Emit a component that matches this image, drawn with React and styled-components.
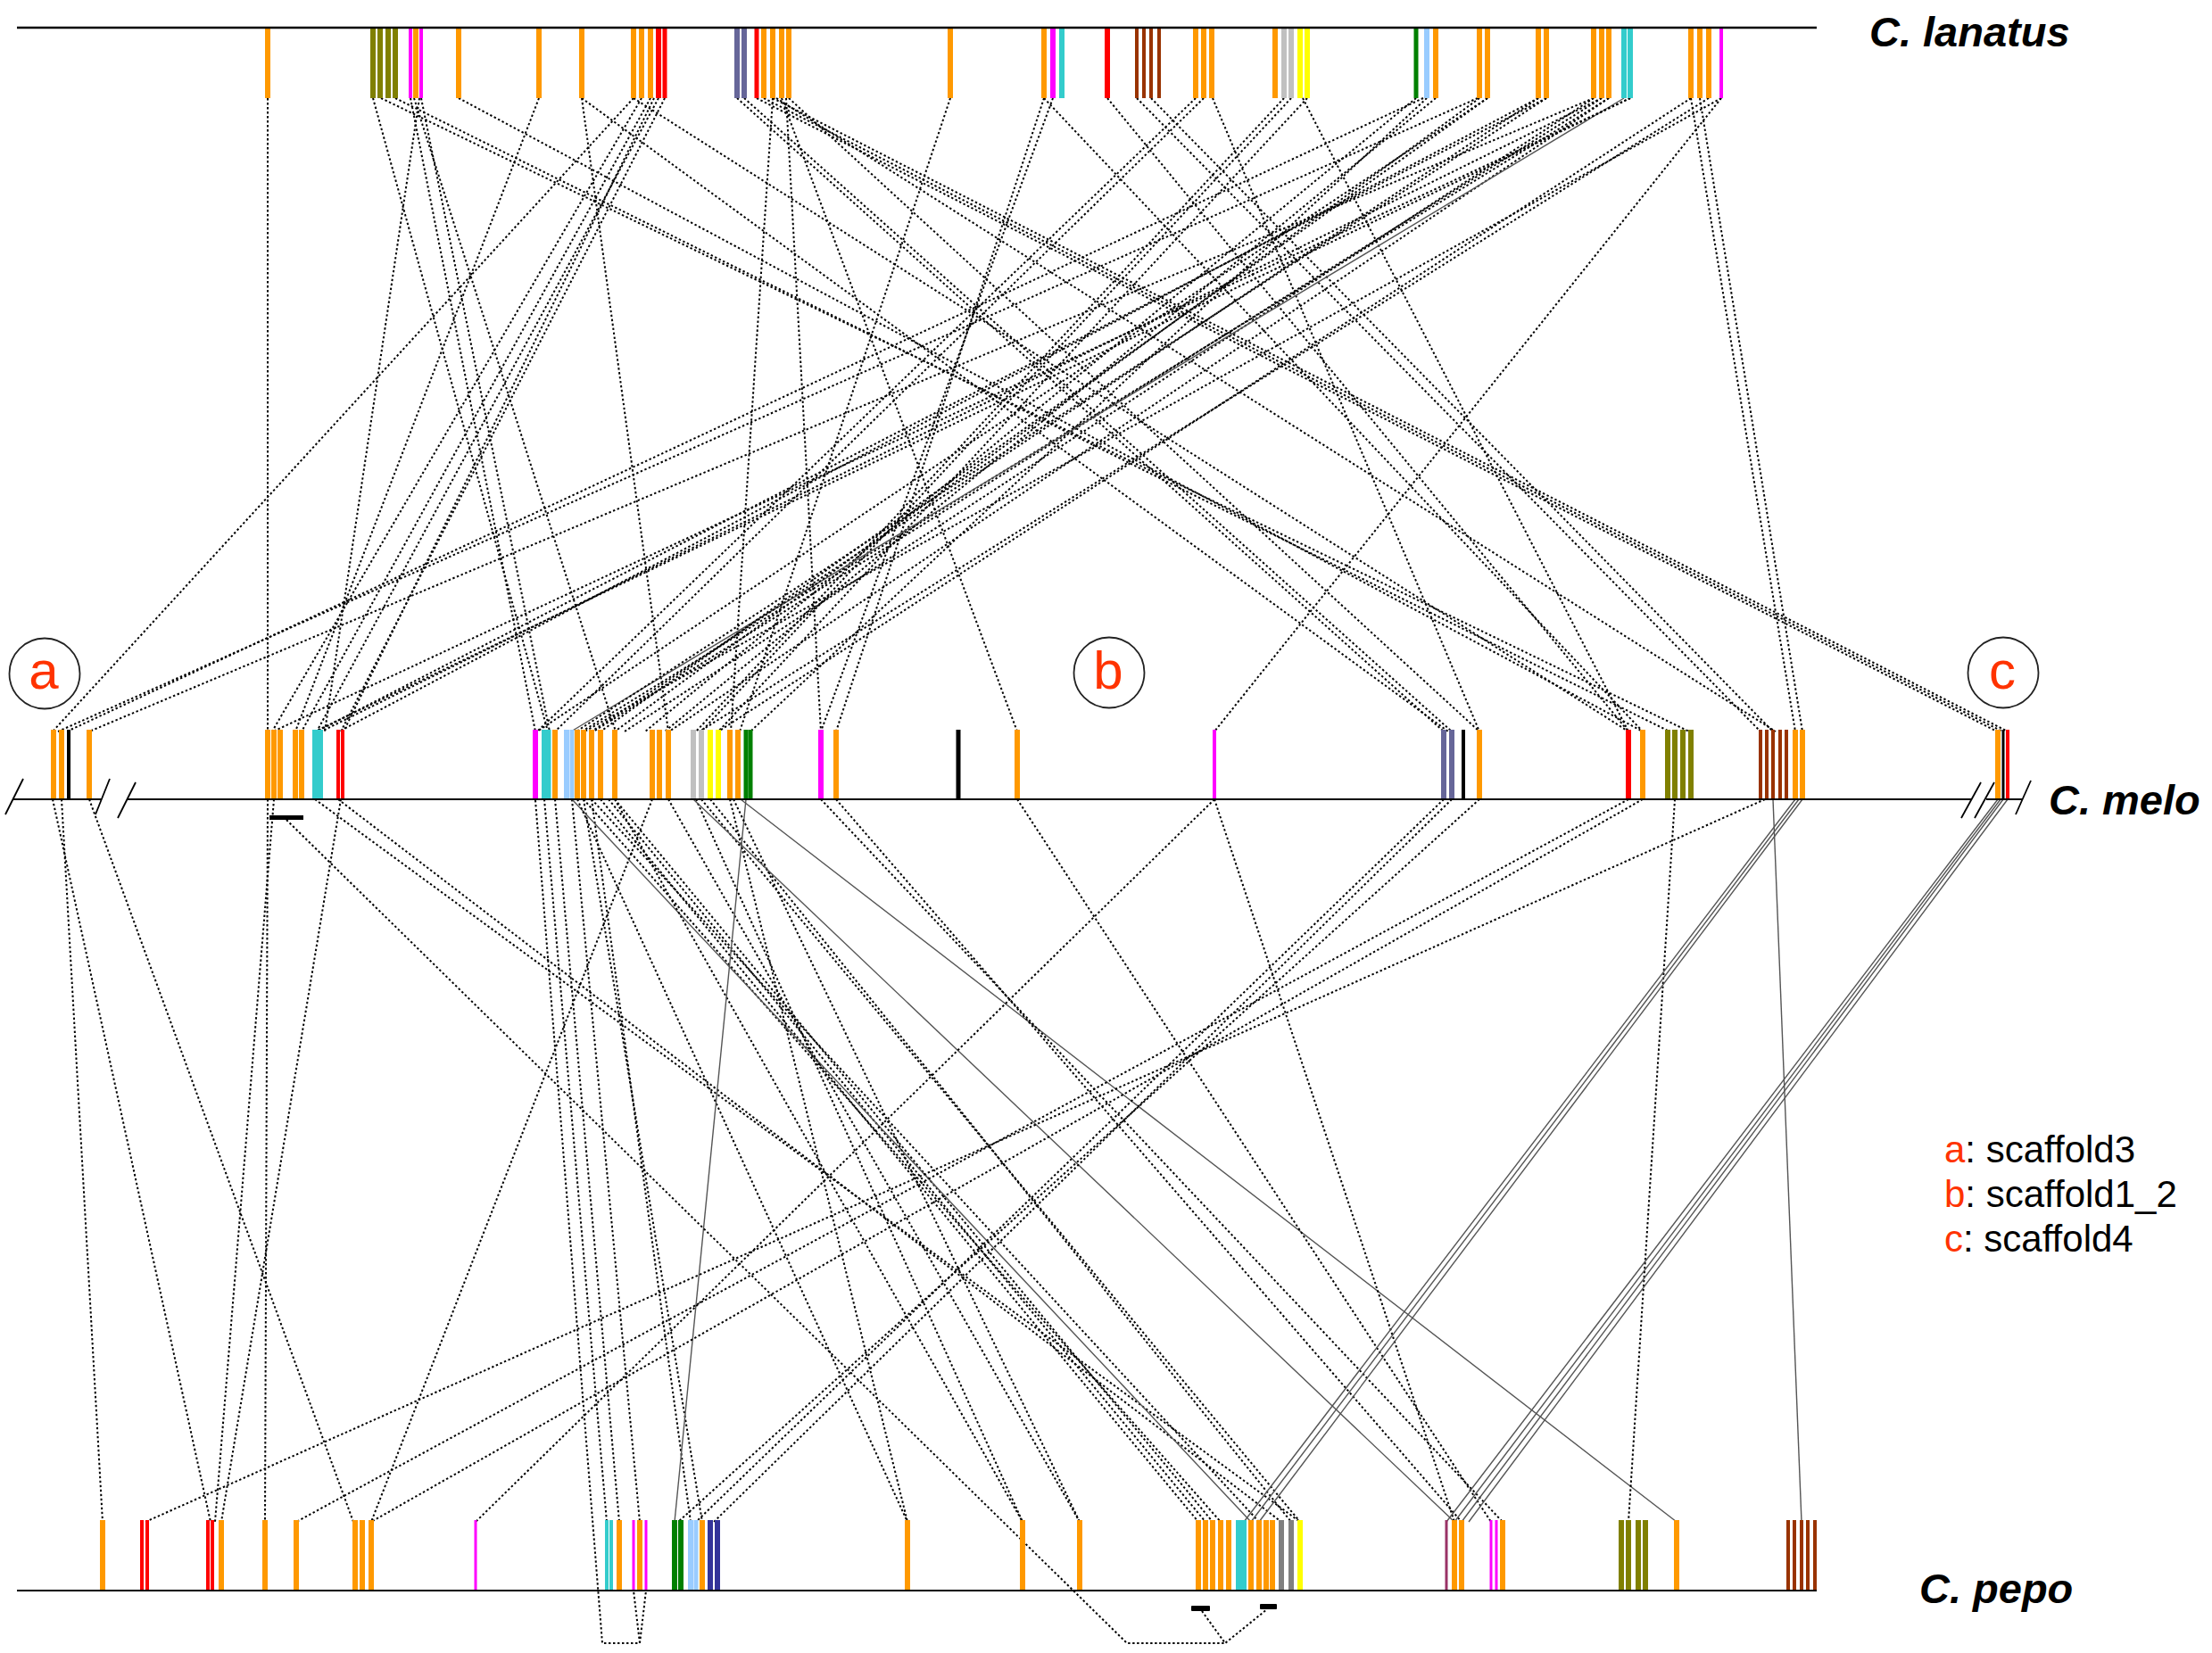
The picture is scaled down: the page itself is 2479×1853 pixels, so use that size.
import React from 'react';
import styled, { createGlobalStyle } from 'styled-components';

const GlobalStyle = createGlobalStyle`
  html, body {
    margin: 0;
    padding: 0;
    background: #fff;
  }
  body {
    font-family: "Liberation Sans", Arial, sans-serif;
  }
`;

const COLORS = {
  O: '#ff9900',
  Ol: '#808000',
  M: '#ff00ff',
  R: '#ff0000',
  S: '#666699',
  Br: '#993300',
  G: '#c0c0c0',
  DG: '#808080',
  Y: '#ffff00',
  Gr: '#008000',
  LB: '#99ccff',
  C: '#33cccc',
  N: '#333399',
  DM: '#993366',
  K: '#000000',
};

// rows: y of the axis line and the top of the gene bars
const TOP = { axis: 31, barTop: 32, barBottom: 110 };
const MID = { axis: 896, barTop: 818, barBottom: 896 };
const BOT = { axis: 1783, barTop: 1704, barBottom: 1782 };

// [centre x, colour, width]
const lanatusGenes = [
  [300, 'O'],
  [418, 'Ol'], [426, 'Ol'], [435, 'Ol'], [443, 'Ol'],
  [460, 'M', 4], [466, 'O'], [472, 'M', 4],
  [514, 'O'], [604, 'O'], [652, 'O'],
  [710, 'O'], [719, 'O'], [729, 'O'], [738, 'R'], [745, 'R', 5],
  [826, 'S'], [834, 'S'],
  [848, 'R', 5], [856, 'O'], [866, 'O'], [876, 'O'], [884, 'O'],
  [1065, 'O'],
  [1170, 'O'], [1180, 'M'], [1190, 'C'],
  [1241, 'R'],
  [1274, 'Br', 4], [1282, 'Br', 4], [1290, 'Br', 4], [1299, 'Br', 4],
  [1340, 'O'], [1349, 'O'], [1358, 'O'],
  [1429, 'O'], [1439, 'G'], [1447, 'G'], [1457, 'Y'], [1465, 'Y'],
  [1587, 'Gr', 5], [1599, 'LB'], [1609, 'O'],
  [1658, 'O'], [1667, 'O'],
  [1724, 'O'], [1733, 'O'],
  [1786, 'O'], [1795, 'O'], [1803, 'O'], [1820, 'C'], [1827, 'C'],
  [1895, 'O'], [1905, 'O'], [1915, 'O'], [1929, 'M', 4],
];

const meloGenes = [
  [60, 'O'], [69, 'O'], [77, 'K', 4], [100, 'O'],
  [300, 'O'], [307, 'O'], [314, 'O'], [331, 'O'], [338, 'O'],
  [353, 'C'], [359, 'C'], [379, 'R', 4], [384, 'R', 4],
  [600, 'M'], [610, 'C'], [615, 'C', 5], [622, 'O'],
  [635, 'LB'], [641, 'LB', 5], [647, 'O'], [654, 'O'], [663, 'O'], [673, 'O'], [689, 'O'],
  [731, 'O'], [739, 'O'], [749, 'O'],
  [777, 'G'], [786, 'G'], [796, 'Y'], [805, 'Y'], [818, 'O'], [827, 'O'], [836, 'Gr', 5], [841, 'Gr', 5],
  [920, 'M'], [937, 'O'],
  [1074, 'K', 5],
  [1140, 'O'],
  [1361, 'M', 4],
  [1618, 'S'], [1627, 'S'], [1640, 'K', 4], [1658, 'O'],
  [1825, 'R'], [1841, 'O'],
  [1869, 'Ol'], [1877, 'Ol'], [1886, 'Ol'], [1895, 'Ol'],
  [1973, 'Br', 4], [1980, 'Br', 4], [1987, 'Br', 4], [1995, 'Br', 4], [2002, 'Br', 4],
  [2012, 'O'], [2020, 'O'],
  [2239, 'O'], [2245, 'K', 3], [2250, 'R', 4],
];

const pepoGenes = [
  [115, 'O'],
  [159, 'R', 4], [165, 'R', 4],
  [233, 'R', 4], [238, 'R', 4], [248, 'O'],
  [297, 'O'], [332, 'O'],
  [398, 'O'], [406, 'O'], [416, 'O'],
  [533, 'M', 3],
  [680, 'C', 4], [685, 'C', 4], [694, 'O'],
  [710, 'M', 3], [717, 'O'], [724, 'M', 3],
  [756, 'Gr'], [763, 'Gr'],
  [774, 'LB'], [780, 'LB', 5], [787, 'O'],
  [796, 'N'], [804, 'N'],
  [1017, 'O'], [1146, 'O'], [1210, 'O'],
  [1343, 'O'], [1351, 'O'], [1359, 'O'], [1368, 'O'], [1377, 'O'],
  [1388, 'C'], [1394, 'C'],
  [1402, 'O'], [1411, 'O'], [1419, 'O'], [1426, 'O'],
  [1436, 'DG'], [1447, 'DG'], [1457, 'Y'],
  [1621, 'DM', 3], [1630, 'O'], [1638, 'O'],
  [1671, 'M', 3], [1677, 'M', 3], [1684, 'O'],
  [1817, 'Ol'], [1825, 'Ol'], [1836, 'Ol'], [1844, 'Ol'],
  [1879, 'O'],
  [2004, 'Br', 4], [2011, 'Br', 4], [2019, 'Br', 4], [2026, 'Br', 4], [2034, 'Br', 4],
];

// [x on C. lanatus, x on C. melo, solid?]
const lanatusToMelo = [
  [300, 300], [427, 1893], [443, 1871], [418, 614], [464, 690], [470, 364],
  [460, 600], [472, 616], [514, 1841], [604, 331], [652, 749], [652, 1623],
  [710, 59], [710, 1825], [719, 305], [729, 338], [738, 355], [745, 382],
  [733, 385], [826, 1618], [834, 1627], [848, 2238], [856, 2244], [866, 2250],
  [870, 1990], [876, 1140], [881, 920], [866, 819], [884, 1658], [1065, 829],
  [1170, 1841], [1170, 937], [1180, 920], [1241, 1825], [1274, 1973], [1290, 1987],
  [1340, 602], [1349, 622], [1359, 1658], [1439, 780], [1447, 786],
  [1460, 1825], [1465, 805], [1587, 723], [1599, 841], [1609, 745],
  [1595, 75], [1656, 65], [1667, 602], [1724, 380], [1733, 355],
  [1786, 100], [1795, 360], [1803, 750], [1786, 700], [1795, 665],
  [1803, 652], [1820, 640, true], [1827, 353], [1827, 306], [1895, 2012],
  [1905, 2020], [1915, 784], [1895, 805], [1929, 1361], [1929, 655],
  [1733, 646], [1724, 663], [1667, 673], [1658, 689],
];

// [x on C. melo, x on C. pepo, solid?]
const meloToPepo = [
  [59, 236], [69, 115], [100, 396], [300, 297], [307, 241], [353, 1457],
  [382, 248], [379, 1436],
  [610, 680], [622, 694], [641, 717], [663, 774], [654, 787], [673, 1343],
  [682, 1351], [689, 1359], [654, 1368], [641, 1402, true], [663, 1411],
  [647, 1017], [689, 1146],
  [731, 416], [749, 1210], [786, 1457], [796, 1447], [818, 1017],
  [836, 756, true], [780, 1146], [822, 1210],
  [777, 1630, true], [830, 1879, true],
  [920, 1684], [937, 1638], [1140, 1671], [1361, 533], [1361, 1630],
  [1618, 780], [1627, 800], [1658, 760],
  [1825, 332], [1841, 416], [1978, 163], [1877, 1825],
  [1987, 2019, true], [2012, 1394, true], [2016, 1402, true], [2020, 1411, true],
  [2239, 1621, true], [2242, 1630, true], [2245, 1638, true], [2250, 1646, true],
];

// links that run below the C. pepo axis and turn back up
const detours = [
  '600,897 675,1842 717,1842 710,1783',
  '717,1842 724,1783',
  '321,919 1263,1842 1373,1842',
  '1347,1806 1373,1842 1420,1804',
];

const scaffolds = [
  { key: 'a', cx: 50, cy: 755, name: 'scaffold3' },
  { key: 'b', cx: 1243, cy: 754, name: 'scaffold1_2' },
  { key: 'c', cx: 2245, cy: 754, name: 'scaffold4' },
];

const Figure = styled.div`
  position: relative;
  width: 2479px;
  height: 1853px;
  background: #fff;
  overflow: hidden;
`;

const Chart = styled.svg`
  display: block;
`;

const Axis = styled.line`
  stroke: #000;
  stroke-width: ${p => p.$weight || 2.2};
`;

const Break = styled.line`
  stroke: #000;
  stroke-width: 1.8;
`;

const Gene = styled.rect`
  fill: ${p => p.$color};
`;

const Link = styled.line`
  fill: none;
  stroke: ${p => (p.$solid ? '#555' : '#000')};
  stroke-width: ${p => (p.$solid ? 1.4 : 2)};
  stroke-dasharray: ${p => (p.$solid ? 'none' : '2.4 2.6')};
`;

const Detour = styled.polyline`
  fill: none;
  stroke: #000;
  stroke-width: 2;
  stroke-dasharray: 2.4 2.6;
`;

const Tick = styled.rect`
  fill: #000;
`;

const Ring = styled.circle`
  fill: none;
  stroke: #222;
  stroke-width: 1.8;
`;

const RingLetter = styled.text`
  font-family: "Liberation Sans", Arial, sans-serif;
  font-size: 60px;
  fill: #ff3300;
  text-anchor: middle;
`;

const SpeciesLabel = styled.text`
  font-family: "Liberation Sans", Arial, sans-serif;
  font-size: 47px;
  font-weight: bold;
  font-style: italic;
  fill: #000;
`;

const Legend = styled.ul`
  position: absolute;
  left: 2179px;
  top: 1264px;
  margin: 0;
  padding: 0;
  list-style: none;
  font-family: "Liberation Sans", Arial, sans-serif;
  font-size: 42px;
  line-height: 50px;
  color: #000;
`;

const LegendItem = styled.li`
  white-space: nowrap;
`;

const Key = styled.span`
  color: #ff3300;
`;

const GeneTrack = ({ genes, row }) => (
  <g>
    {genes.map(([x, c, w = 6], i) => (
      <Gene
        key={i}
        x={x - w / 2}
        y={row.barTop}
        width={w}
        height={row.barBottom - row.barTop}
        $color={COLORS[c]}
      />
    ))}
  </g>
);

const Links = ({ pairs, from, to }) => (
  <g>
    {pairs.map(([a, b, solid], i) => (
      <Link
        key={i}
        x1={a}
        y1={from.barBottom}
        x2={b}
        y2={to.barTop + 2}
        $solid={solid}
      />
    ))}
  </g>
);

export default function App() {
  return (
    <>
      <GlobalStyle />
      <Figure>
        <Chart width="2479" height="1853" viewBox="0 0 2479 1853">
          <Links pairs={lanatusToMelo} from={TOP} to={MID} />
          <Links pairs={meloToPepo} from={MID} to={BOT} />
          {detours.map((pts, i) => (
            <Detour key={i} points={pts} />
          ))}

          <GeneTrack genes={lanatusGenes} row={TOP} />
          <GeneTrack genes={meloGenes} row={MID} />
          <GeneTrack genes={pepoGenes} row={BOT} />

          <Axis x1="19" y1={TOP.axis} x2="2036" y2={TOP.axis} $weight={2.6} />

          <Axis x1="14" y1={MID.axis} x2="113" y2={MID.axis} />
          <Axis x1="142" y1={MID.axis} x2="2209" y2={MID.axis} />
          <Axis x1="2226" y1={MID.axis} x2="2267" y2={MID.axis} />
          <Break x1="6" y1="913" x2="26" y2="873" />
          <Break x1="107" y1="913" x2="123" y2="873" />
          <Break x1="132" y1="917" x2="152" y2="877" />
          <Break x1="2198" y1="917" x2="2220" y2="877" />
          <Break x1="2213" y1="917" x2="2235" y2="877" />
          <Break x1="2259" y1="913" x2="2276" y2="875" />

          <Axis x1="19" y1={BOT.axis} x2="2036" y2={BOT.axis} />

          <Tick x="302" y="914" width="38" height="5" />
          <Tick x="1335" y="1800" width="21" height="6" rx="1" />
          <Tick x="1412" y="1798" width="19" height="6" rx="1" />

          {scaffolds.map(s => (
            <g key={s.key}>
              <Ring cx={s.cx} cy={s.cy} r="39.5" />
              <RingLetter x={s.cx - 1} y="772">{s.key}</RingLetter>
            </g>
          ))}

          <SpeciesLabel x="2095" y="52">C. lanatus</SpeciesLabel>
          <SpeciesLabel x="2296" y="913">C. melo</SpeciesLabel>
          <SpeciesLabel x="2151" y="1797">C. pepo</SpeciesLabel>
        </Chart>

        <Legend>
          {scaffolds.map(s => (
            <LegendItem key={s.key}>
              <Key>{s.key}</Key>: {s.name}
            </LegendItem>
          ))}
        </Legend>
      </Figure>
    </>
  );
}
